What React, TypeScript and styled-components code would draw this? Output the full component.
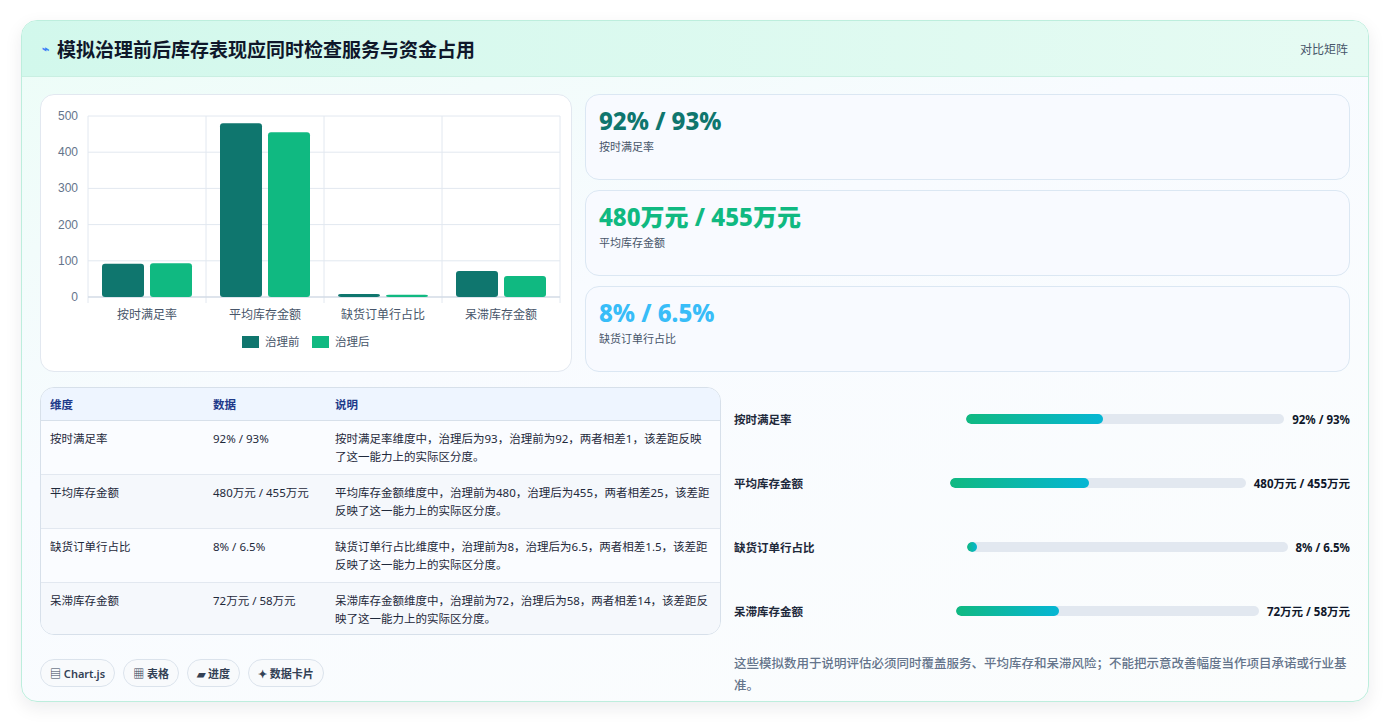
import React from 'react'
import styled, { createGlobalStyle } from 'styled-components'

const Global = createGlobalStyle`
  body { margin: 0; background: #fff; font-family: "Noto Sans", "Noto Sans CJK SC", sans-serif; color: #0f172a; }
`

const Page = styled.div`
  padding: 20px 21px 21px 21px;
`

const Card = styled.div`
  border: 1px solid #bdeedd;
  border-radius: 16px;
  background: linear-gradient(160deg, #ecfdf7 0%, #f8fbff 40%, #fbfdfd 100%);
  box-shadow: 0 6px 18px rgba(15, 23, 42, 0.08);
  overflow: hidden;
  height: 680px;
`

const Header = styled.div`
  display: flex;
  align-items: center;
  justify-content: space-between;
  height: 55px;
  padding: 0 20px;
  background: linear-gradient(90deg, #d2f8ec, #e6fbf3);
  border-bottom: 1px solid #c9efe2;
`

const Title = styled.h1`
  margin: 0;
  font-size: 19px;
  font-weight: 700;
  display: flex;
  align-items: center;
  gap: 8px;
  color: #0f172a;
`

const Bolt = styled.span`
  color: #3b82f6;
  font-size: 12px;
`

const HeaderTag = styled.span`
  font-size: 12px;
  color: #475569;
`

const Row = styled.div<{ $left: number; $gap: number }>`
  display: grid;
  grid-template-columns: ${p => p.$left}px 1fr;
  column-gap: ${p => p.$gap}px;
  padding: 0 18px;
`

const TopRow = styled(Row)`
  padding-top: 17px;
  padding-bottom: 15px;
`

const Panel = styled.div`
  background: #fff;
  border: 1px solid #e2e8f0;
  border-radius: 14px;
`

const ChartPanel = styled(Panel)`
  height: 278px;
  padding: 0 12px 0 8px;
  box-sizing: border-box;
`

const Stats = styled.div`
  display: flex;
  flex-direction: column;
  gap: 10px;
`

const Stat = styled.div`
  height: 86px;
  box-sizing: border-box;
  border: 1px solid #dbe7f3;
  border-radius: 14px;
  background: #f8faff;
  padding: 10px 13px;
`

const StatValue = styled.div<{ $c: string }>`
  font-size: 24px;
  font-weight: 800;
  color: ${p => p.$c};
  line-height: 32px;
`

const StatLabel = styled.div`
  font-size: 11px;
  color: #475569;
  margin-top: 1px;
`

const TableWrap = styled(Panel)`
  overflow: hidden;
  background: #fafcff;
  height: 246px;
  border-color: #d7e0ea;
`

const Table = styled.table`
  width: 100%;
  border-collapse: collapse;
  font-size: 11.5px;
  th { background: #eef5ff; color: #1e3a8a; text-align: left; font-weight: 600; height: 32px; padding: 0 9px; border-bottom: 1px solid #d7e0ea; }
  td { vertical-align: top; padding: 9px 9px 8px; line-height: 18px; color: #1e293b; border-bottom: 1px solid #e2e8f0; }
  tr:nth-child(even) td { background: #f5f8fc; }
  tr:last-child td { border-bottom: none; }
`

const Bars = styled.div`
  display: flex;
  flex-direction: column;
`

const BarRow = styled.div`
  display: grid;
  grid-template-columns: minmax(0, 1fr) minmax(0, 1.42fr) auto;
  gap: 8px;
  align-items: center;
  height: 64px;
  font-size: 11.5px;
  font-weight: 600;
  color: #1e293b;
`

const Track = styled.div`
  height: 10px;
  border-radius: 5px;
  background: #e2e8f0;
  overflow: hidden;
`

const Fill = styled.div`
  height: 100%;
  border-radius: 5px;
  background: linear-gradient(90deg, #10b981, #06b6d4);
  min-width: 10px;
`

const BarVal = styled.span`
  font-weight: 700;
  color: #0f172a;
`

const Chips = styled.div`
  display: flex;
  gap: 8px;
  align-items: center;
  padding-top: 24px;
`

const Chip = styled.span`
  display: inline-flex;
  align-items: center;
  gap: 3px;
  height: 28px;
  box-sizing: border-box;
  border: 1px solid #dbe3ec;
  border-radius: 14px;
  padding: 0 9px;
  font-size: 11px;
  font-weight: 600;
  line-height: 1;
  color: #334155;
  background: #f8fafc;
`

const Note = styled.p`
  margin: 10px 0 0;
  font-size: 12.5px;
  line-height: 22px;
  color: #64748b;
  font-weight: 500;
`

const data = [
  { name: '按时满足率', a: 92, b: 93, v: '92% / 93%', fill: 43, desc: '按时满足率维度中，治理后为93，治理前为92，两者相差1，该差距反映了这一能力上的实际区分度。' },
  { name: '平均库存金额', a: 480, b: 455, v: '480万元 / 455万元', fill: 47, desc: '平均库存金额维度中，治理前为480，治理后为455，两者相差25，该差距反映了这一能力上的实际区分度。' },
  { name: '缺货订单行占比', a: 8, b: 6.5, v: '8% / 6.5%', fill: 2, desc: '缺货订单行占比维度中，治理前为8，治理后为6.5，两者相差1.5，该差距反映了这一能力上的实际区分度。' },
  { name: '呆滞库存金额', a: 72, b: 58, v: '72万元 / 58万元', fill: 34, desc: '呆滞库存金额维度中，治理前为72，治理后为58，两者相差14，该差距反映了这一能力上的实际区分度。' },
]

function Chart() {
  const x0 = 39, x1 = 511, y0 = 21, y1 = 202
  const cw = (x1 - x0) / 4
  const sc = (v: number) => y1 - (v / 500) * (y1 - y0)
  return (
    <svg width="512" height="270" style={{ display: 'block' }}>
      {[0, 100, 200, 300, 400, 500].map(t => (
        <g key={t}>
          <line x1={x0} x2={x1} y1={sc(t)} y2={sc(t)} stroke="#e2e8f0" />
          <text x={x0 - 10} y={sc(t) + 4} textAnchor="end" fontSize="12" fill="#64748b" fontFamily="Liberation Sans, sans-serif">{t}</text>
        </g>
      ))}
      {[0, 1, 2, 3, 4].map(i => (
        <line key={i} x1={x0 + i * cw} x2={x0 + i * cw} y1={y0} y2={y1 + 6} stroke="#e2e8f0" />
      ))}
      <line x1={x0} x2={x1} y1={y1} y2={y1} stroke="#cbd5e1" />
      {data.map((d, i) => {
        const cx = x0 + i * cw
        return (
          <g key={d.name}>
            <rect x={cx + 14} y={sc(d.a)} width={42} height={y1 - sc(d.a)} rx="3" fill="#0f766e" />
            <rect x={cx + 62} y={sc(d.b)} width={42} height={y1 - sc(d.b)} rx="3" fill="#10b981" />
            <text x={cx + cw / 2} y={y1 + 22} textAnchor="middle" fontSize="12" fill="#475569">{d.name}</text>
          </g>
        )
      })}
      <rect x="193" y="241" width="17" height="12" fill="#0f766e" />
      <text x="216" y="251" fontSize="11.5" fill="#475569">治理前</text>
      <rect x="263" y="241" width="17" height="12" fill="#10b981" />
      <text x="286" y="251" fontSize="11.5" fill="#475569">治理后</text>
    </svg>
  )
}

export default function App() {
  return (
    <Page>
      <Global />
      <Card>
        <Header>
          <Title><Bolt>⌁</Bolt>模拟治理前后库存表现应同时检查服务与资金占用</Title>
          <HeaderTag>对比矩阵</HeaderTag>
        </Header>
        <TopRow $left={532} $gap={13}>
          <ChartPanel><Chart /></ChartPanel>
          <Stats>
            <Stat><StatValue $c="#0f766e">92% / 93%</StatValue><StatLabel>按时满足率</StatLabel></Stat>
            <Stat><StatValue $c="#10b981">480万元 / 455万元</StatValue><StatLabel>平均库存金额</StatLabel></Stat>
            <Stat><StatValue $c="#38bdf8">8% / 6.5%</StatValue><StatLabel>缺货订单行占比</StatLabel></Stat>
          </Stats>
        </TopRow>
        <Row $left={681} $gap={13}>
          <div>
            <TableWrap>
              <Table>
                <colgroup><col style={{ width: 163 }} /><col style={{ width: 122 }} /><col /></colgroup>
                <thead><tr><th>维度</th><th>数据</th><th>说明</th></tr></thead>
                <tbody>
                  {data.map(d => (
                    <tr key={d.name}><td>{d.name}</td><td>{d.v}</td><td>{d.desc}</td></tr>
                  ))}
                </tbody>
              </Table>
            </TableWrap>
            <Chips>
              <Chip>▤ Chart.js</Chip>
              <Chip>▦ 表格</Chip>
              <Chip>▰ 进度</Chip>
              <Chip>✦ 数据卡片</Chip>
            </Chips>
          </div>
          <div>
            <Bars>
              {data.map(d => (
                <BarRow key={d.name}>
                  <span>{d.name}</span>
                  <Track><Fill style={{ width: `${d.fill}%` }} /></Track>
                  <BarVal>{d.v}</BarVal>
                </BarRow>
              ))}
            </Bars>
            <Note>这些模拟数用于说明评估必须同时覆盖服务、平均库存和呆滞风险；不能把示意改善幅度当作项目承诺或行业基准。</Note>
          </div>
        </Row>
      </Card>
    </Page>
  )
}
